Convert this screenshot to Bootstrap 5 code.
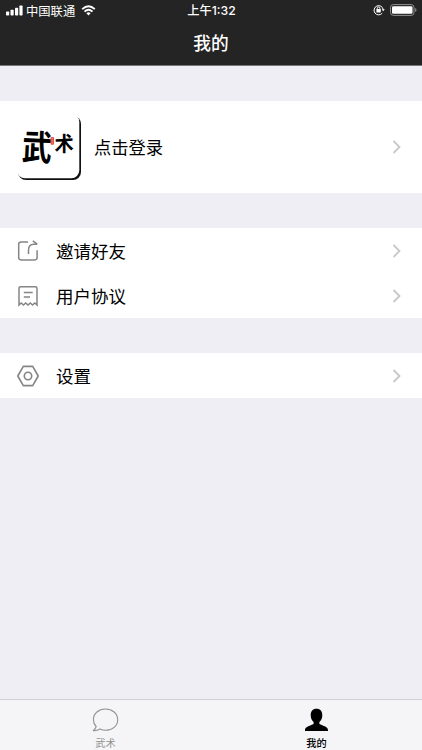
<!DOCTYPE html>
<html lang="zh-CN">
<head>
<meta charset="utf-8">
<meta name="viewport" content="width=device-width, initial-scale=1">
<title>我的</title>
<link href="https://cdn.jsdelivr.net/npm/bootstrap@5.3.0/dist/css/bootstrap.min.css" rel="stylesheet">
<style>
body{font-family:"Liberation Sans","Noto Sans CJK SC",sans-serif;background:#efeef4;color:#000;height:750px;overflow:hidden}
svg{display:block;flex:none}
.top-area{background:#242424;height:66px;border-bottom:1px solid #77767b}
.status-line{height:21px;font-size:12.3px;line-height:21px;padding:0 5px 0 6px}
.carrier{margin-left:3px;padding-top:2px}
.wifi,.signal{margin-bottom:2px}
.wifi{margin-left:6px}
.clock{font-family:Inter,"Noto Sans CJK SC",sans-serif;font-size:12.2px;font-weight:500}
.status-right{padding-bottom:3px}
.page-title{font-size:17.7px;line-height:46px;font-weight:500;height:44px}
.group{margin-top:35px!important}
.cell{height:45px;padding:0 20px 0 17px!important;font-size:17.5px;line-height:1;color:#000}
.cell:hover{color:#000}
.cell-login{height:92px;font-size:17.3px}
.cell span{padding-top:4px}
.label-gap{margin-left:17px}
.logo-gap{margin-left:12px}
.tabs{height:51px;background:#f5f5f7;border-top:1px solid #d1d0d5}
.tab{font-size:10.2px;line-height:16px;color:#929292;padding-top:8px!important}
.tab.active{color:#000;font-weight:500}
.brush{font-family:"Noto Sans CJK SC",sans-serif;font-weight:700}
</style>
<script src="https://cdn.jsdelivr.net/npm/bootstrap@5.3.0/dist/js/bootstrap.bundle.min.js"></script>
</head>
<body class="d-flex flex-column">
<header class="top-area text-white flex-shrink-0">
  <div class="status-line row g-0">
    <div class="col d-flex align-items-center">
      <svg class="signal" width="17" height="11" viewBox="0 0 17 11" fill="#fff"><rect y="6.5" width="3.2" height="4" rx=".8"/><rect x="4.5" y="4.8" width="3.2" height="5.7" rx=".8"/><rect x="9" y="2.8" width="3.2" height="7.7" rx=".8"/><rect x="13.4" y=".4" width="3.2" height="10.1" rx=".8"/></svg>
      <span class="carrier">中国联通</span>
      <svg class="wifi" width="15" height="11" viewBox="0 0 14 11" fill="none" stroke="#fff" stroke-width="1.9"><path d="M.7 4.1Q7-1.7 13.3 4.1M3 6.6Q7 3 11 6.6"/><path d="M4.9 8.2Q7 6.4 9.1 8.2L7 10.5Z" fill="#fff" stroke="none"/></svg>
    </div>
    <div class="col-auto clock">上午1:32</div>
    <div class="col status-right d-flex align-items-center justify-content-end">
      <svg width="12" height="12" viewBox="0 0 12 12" fill="none" stroke="#fff"><path d="M9.2 9.2A4.6 4.6 0 1 1 10.2 5.5"/><path d="M8.6 5.2h3.2l-1.6 2.1z" fill="#fff" stroke="none"/><path d="M4.3 5.4V4.3a1.3 1.3 0 0 1 2.6 0v1.1"/><rect x="3.4" y="5.1" width="4.4" height="3.4" rx=".4" fill="#fff" stroke="none"/></svg>
      <svg class="ms-1" width="28" height="12" viewBox="0 0 28 12"><rect x="1.5" y=".6" width="23.5" height="10.8" rx="2.8" fill="none" stroke="#909090"/><rect x="3" y="2.2" width="20.5" height="7.6" rx="1.3" fill="#fff"/><path d="M26.2 4q1.3.5 1.3 2t-1.3 2z" fill="#909090"/></svg>
    </div>
  </div>
  <h1 class="page-title text-center m-0">我的</h1>
</header>

<main class="flex-grow-1">
  <div class="group list-group list-group-flush">
    <a href="#" class="cell cell-login list-group-item border-0 d-flex align-items-center">
      <svg width="65" height="67" viewBox="0 0 65 67" role="img" aria-label="武术">
        <rect x="1" y="2" width="63" height="64" rx="8" fill="#111"/>
        <rect x="0" y="0" width="62.3" height="64.3" rx="8" fill="#fff"/>
        <g class="brush" fill="#000">
          <text font-size="29" transform="matrix(1.03 .04 -.06 1.2 4.5 45.5)">武</text>
          <text font-size="20" transform="matrix(.96 -.06 0 1.04 37.5 38)">术</text>
        </g>
        <rect x="33.6" y="23" width="3.4" height="7.8" rx="1" fill="#e34b40"/><path d="M34.7 24.6h1.2M34.7 26.8h1.2M34.7 29h1.2" stroke="#ffd5d0" stroke-width=".6"/>
      </svg>
      <span class="logo-gap">点击登录</span>
      <svg class="ms-auto" width="10" height="14" viewBox="0 0 10 14" fill="none" stroke="#c7c7cc" stroke-width="1.8"><path d="m1.5 1 6 6-6 6"/></svg>
    </a>
  </div>

  <div class="group list-group list-group-flush">
    <a href="#" class="cell list-group-item border-0 d-flex align-items-center">
      <svg width="22" height="22" viewBox="0 0 22 22" fill="none" stroke="#858585" stroke-width="1.5"><path d="M11 2H4Q1.7 2 1.7 4.3V17.6Q1.7 19.9 4 19.9H17.8Q20.1 19.9 20.1 17.6V10.3M11.5 14V10.2Q11.5 4.2 16.6 4.2H20.2M15.8.8 20.2 4.2"/></svg>
      <span class="label-gap">邀请好友</span>
      <svg class="ms-auto" width="10" height="14" viewBox="0 0 10 14" fill="none" stroke="#c7c7cc" stroke-width="1.8"><path d="m1.5 1 6 6-6 6"/></svg>
    </a>
    <a href="#" class="cell list-group-item border-0 d-flex align-items-center">
      <svg width="22" height="22" viewBox="0 0 22 22" fill="none" stroke="#858585" stroke-width="1.5"><path d="M2 20V3.4Q2 1.7 3.7 1.7H18.3Q20 1.7 20 3.4V20L17.8 18 15.5 20 13.3 18 11 20 8.7 18 6.5 20 4.2 18ZM6.8 7.4H15.7M6.8 12H13"/></svg>
      <span class="label-gap">用户协议</span>
      <svg class="ms-auto" width="10" height="14" viewBox="0 0 10 14" fill="none" stroke="#c7c7cc" stroke-width="1.8"><path d="m1.5 1 6 6-6 6"/></svg>
    </a>
  </div>

  <div class="group list-group list-group-flush">
    <a href="#" class="cell list-group-item border-0 d-flex align-items-center">
      <svg width="22" height="22" viewBox="0 0 22 22" fill="none" stroke="#858585" stroke-width="1.6" stroke-linejoin="round"><path d="M6.3 1.4H15.7L21.2 11 15.7 20.6H6.3L.8 11Z"/><circle cx="11" cy="11" r="3.7"/></svg>
      <span class="label-gap">设置</span>
      <svg class="ms-auto" width="10" height="14" viewBox="0 0 10 14" fill="none" stroke="#c7c7cc" stroke-width="1.8"><path d="m1.5 1 6 6-6 6"/></svg>
    </a>
  </div>
</main>

<nav class="tabs nav nav-fill flex-shrink-0">
  <a href="#" class="tab nav-link w-50 p-0 d-flex flex-column align-items-center">
    <svg width="27" height="24" viewBox="0 0 27 24" fill="none" stroke="#929292" stroke-width="1.1" stroke-linejoin="round"><path d="M4.2 18.5C2.2 16.5 1.4 14 1.4 11.5 1.4 5.5 6.7 1 13.5 1S25.7 5.5 25.7 11.7 20.4 22.3 13.5 22.3C11.5 22.3 9.4 21.8 8 21 6 22.2 3.8 22.8 1.3 22.6 3 21.3 3.7 20 4.2 18.5Z"/></svg>
    <span class="mt-1">武术</span>
  </a>
  <a href="#" class="tab active nav-link w-50 p-0 d-flex flex-column align-items-center">
    <svg width="25" height="24" viewBox="0 0 25 24"><path d="M12.5.8C16.4.8 18.3 3.3 18.3 7.2 18.3 10.3 17.1 12.5 15.4 14.1V16C18 17.6 24 18.4 24 22V23H1V22C1 18.4 7 17.6 9.6 16V14.1C7.9 12.5 6.7 10.3 6.7 7.2 6.7 3.3 8.6.8 12.5.8Z"/></svg>
    <span class="mt-1">我的</span>
  </a>
</nav>
</body>
</html>
